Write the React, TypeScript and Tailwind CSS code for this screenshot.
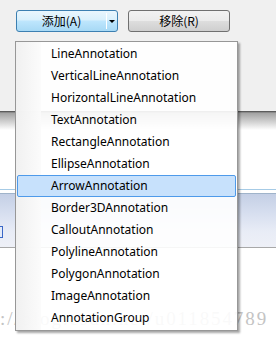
import React from "react";

const items = [
  "LineAnnotation",
  "VerticalLineAnnotation",
  "HorizontalLineAnnotation",
  "TextAnnotation",
  "RectangleAnnotation",
  "EllipseAnnotation",
  "ArrowAnnotation",
  "Border3DAnnotation",
  "CalloutAnnotation",
  "PolylineAnnotation",
  "PolygonAnnotation",
  "ImageAnnotation",
  "AnnotationGroup",
];

const App: React.FC = () => {
  const selected = "ArrowAnnotation";

  return (
    <div className="relative w-[276px] h-[342px] overflow-hidden bg-white font-['Noto_Sans','Noto_Sans_CJK_SC',sans-serif]">
      {/* toolbar with buttons */}
      <div className="h-[111px] bg-[#f0f0f0] pt-[10px] pl-[16px] flex gap-[10px] items-start">
        {/* split button (hot) */}
        <div className="w-[102px] h-[22px] rounded-[3px] border border-[#3c7fb1] flex overflow-hidden bg-[linear-gradient(to_bottom,#eaf6fd_0%,#d9f0fc_45%,#bee6fd_50%,#a7d9f5_100%)]">
          <div className="flex-1 flex items-center justify-center text-[12px] text-black font-['Noto_Sans_CJK_SC',sans-serif] leading-none">
            添加(A)
          </div>
          <div className="w-px my-[2px] bg-white" />
          <div className="w-[10px] flex items-center justify-center">
            <div className="w-0 h-0 border-l-[3px] border-r-[3px] border-t-[3px] border-l-transparent border-r-transparent border-t-black" />
          </div>
        </div>
        {/* normal button */}
        <div className="w-[102px] h-[22px] rounded-[3px] border border-[#707070] flex items-center justify-center text-[12px] text-black font-['Noto_Sans_CJK_SC',sans-serif] leading-none bg-[linear-gradient(to_bottom,#f2f2f2_0%,#ebebeb_48%,#dddddd_52%,#cfcfcf_100%)]">
          移除(R)
        </div>
      </div>

      {/* window content behind the menu */}
      <div className="h-px bg-[#5c5c5c]" />
      <div className="h-px bg-[#8a8a8a]" />
      <div className="h-[17px] bg-gradient-to-b from-[#a2a2a2] to-white" />
      <div className="h-[59px] bg-white" />
      <div className="h-px bg-[#a6cbe6]" />
      <div className="h-[3px] bg-white" />
      <div className="h-px bg-[#9fb3ca]" />
      <div className="relative h-[53px] bg-[linear-gradient(to_bottom,#c4cfe5_0%,#d6deef_35%,#e8ecf6_70%,#eef0f7_100%)]">
        <div className="absolute left-[-9px] top-[32px] w-[12px] h-[12px] border border-[#3a67c7] bg-[#e4ebf8]" />
      </div>
      <div className="h-px bg-[#a8a8a8]" />

      {/* watermark, drawn under the menu */}
      <div className="absolute left-0 top-[309px] text-[19px] tracking-[1.9px] leading-none text-[#c4c4c4] font-['Liberation_Serif',serif] whitespace-nowrap pointer-events-none">
        ://blog.csdn.net/u011854789
      </div>

      {/* dropdown menu */}
      <div className="absolute left-[15px] top-[41px] w-[223px] h-[290px] border border-[#979797] bg-white/90 p-px shadow-[2px_2px_2px_rgba(0,0,0,0.35)]">
        <div className="absolute left-0 top-0 bottom-0 w-[25px] bg-gradient-to-r from-[#efefef]/90 to-[#fbfbfb]/90" />
        <div className="relative flex flex-col">
          {items.map((item) => (
            <div
              key={item}
              className={
                item === selected
                  ? "h-[22px] flex items-center pl-[33px] text-[12px] text-black rounded-[2px] border border-[#4e9aea] bg-[#c7e1fc]"
                  : "h-[22px] flex items-center pl-[34px] text-[12px] text-black"
              }
            >
              {item}
            </div>
          ))}
        </div>
      </div>
    </div>
  );
};

export default App;
